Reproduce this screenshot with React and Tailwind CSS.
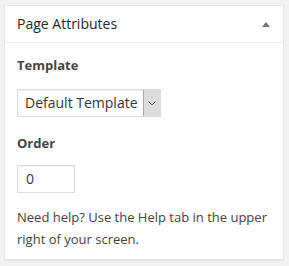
export default function App() {
    return (
        <div className="w-[289px] h-[266px] bg-[#f1f1f1] pl-[4px] pt-[5px] font-['Open_Sans',sans-serif]">
            <div className="w-[280px] h-[255px] bg-white border border-[#e5e5e5] shadow-[0_1px_1px_rgba(0,0,0,0.04)]">
                {/* header */}
                <div className="h-[37px] border-b border-[#eeeeee] flex items-center justify-between pl-[12px] pr-[13px]">
                    <h2 className="text-[14px] leading-[20px] text-[#23282d]">Page Attributes</h2>
                    <svg width="8" height="5" viewBox="0 0 8 5">
                        <path d="M4 0 L8 5 L0 5 Z" fill="#72777c" />
                    </svg>
                </div>

                <div className="px-[12px] pt-[12px] text-[#444] text-[13px]">
                    <p className="font-bold leading-[20px]">Template</p>

                    <div className="mt-[14px] w-[144px] h-[28px] border border-[#ddd] flex shadow-[inset_0_1px_2px_rgba(0,0,0,0.07)]">
                        <span className="flex-1 pl-[7px] text-[14px] leading-[26px] text-[#32373c]">Default Template</span>
                        <span className="w-[17px] bg-[#dcdcdc] border-l border-[#a9a9a9] flex items-center justify-center">
                            <svg width="8" height="5" viewBox="0 0 8 5">
                                <path d="M0.5 0.5 L4 4 L7.5 0.5" fill="none" stroke="#555" strokeWidth="1" />
                            </svg>
                        </span>
                    </div>

                    <p className="mt-[16px] font-bold leading-[20px]">Order</p>

                    <div className="mt-[12px] w-[58px] h-[28px] border border-[#ddd] pl-[8px] text-[14px] leading-[26px] text-[#32373c] shadow-[inset_0_1px_2px_rgba(0,0,0,0.07)]">
                        0
                    </div>

                    <p className="mt-[13px] leading-[22px]">
                        Need help? Use the Help tab in the upper right of your screen.
                    </p>
                </div>
            </div>
        </div>
    );
}
